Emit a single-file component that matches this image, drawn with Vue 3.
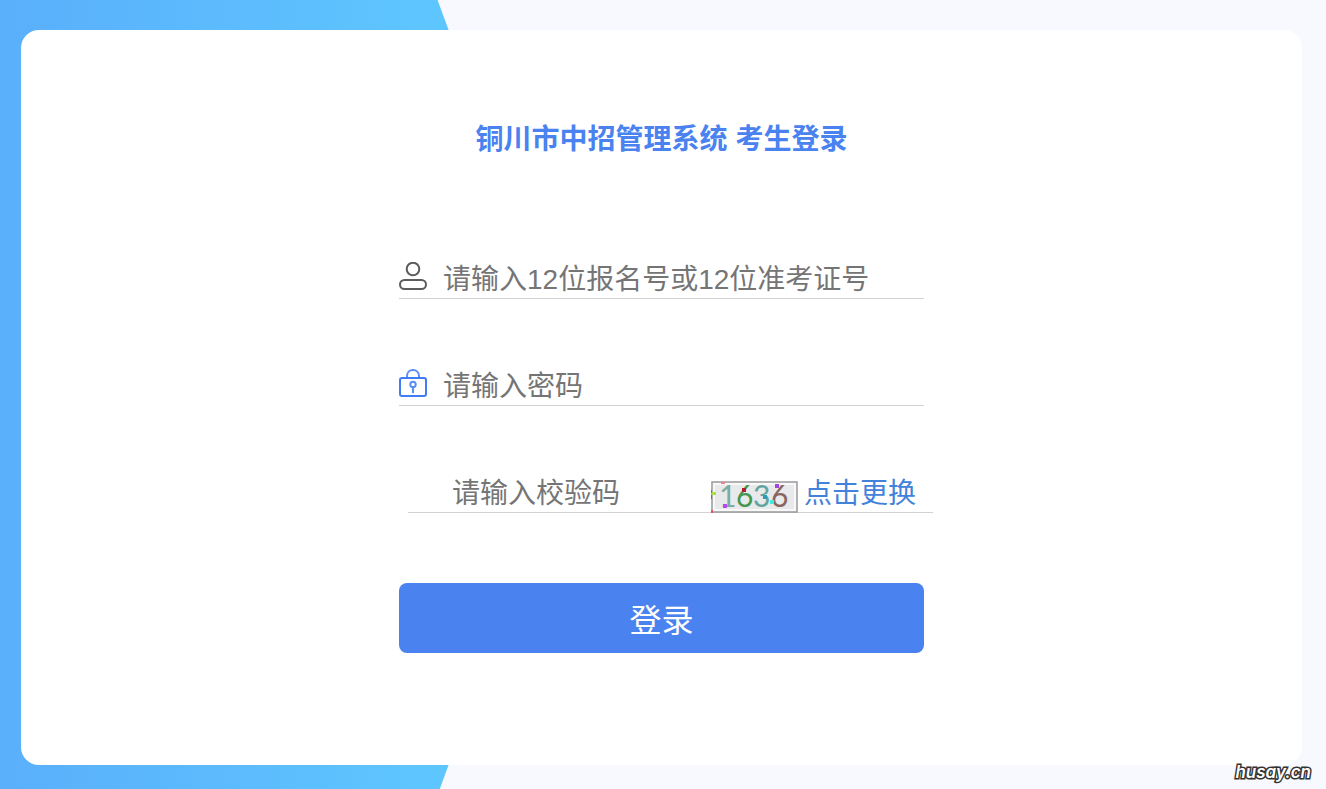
<script setup>
import { ref } from 'vue'

const account = ref('')
const password = ref('')
const code = ref('')
</script>

<template>
  <main class="page">
    <section class="card">
      <form class="form" @submit.prevent>
        <h1 class="title">铜川市中招管理系统 考生登录</h1>

        <div class="field">
          <label class="icon" for="account" aria-label="报名号或准考证号">
            <svg width="28" height="28" viewBox="0 0 28 28" fill="none" stroke="#5c5c5c" stroke-width="2">
              <circle cx="14" cy="7" r="6.3" />
              <rect x="1" y="18" width="26" height="9" rx="4.5" />
            </svg>
          </label>
          <input id="account" v-model="account" type="text" placeholder="请输入12位报名号或12位准考证号" />
        </div>

        <div class="field">
          <label class="icon" for="password" aria-label="密码">
            <svg width="28" height="28" viewBox="0 0 28 28" fill="none" stroke="#3f7cf5" stroke-width="2">
              <path d="M8 9V7C8 3.500 10.500 1 14 1S20 3.500 20 7V9" stroke="#5a8ef7" />
              <rect x="1" y="9" width="26" height="18" rx="2" />
              <circle cx="14" cy="15.500" r="2.700" stroke="#5a8ef7" />
              <path d="M14 17V24" stroke="#5a8ef7" />
            </svg>
          </label>
          <input id="password" v-model="password" type="password" placeholder="请输入密码" />
        </div>

        <div class="field field-code">
          <input id="code" v-model="code" type="text" aria-label="校验码" placeholder="请输入校验码" />
          <svg class="captcha" width="87" height="32" viewBox="0 0 87 32" role="img" aria-label="校验码图片">
            <rect x="1" y="1" width="85" height="30" fill="#f8f8f9" stroke="#999" stroke-width="1.500" />
            <rect x="4" y="4" width="79" height="24" fill="#e8e9eb" />
            <g class="digits">
              <text x="8" y="26" fill="#7cab9f">1</text>
              <text x="25" y="26" fill="#439751">6</text>
              <text x="42" y="26" fill="#62a49d">3</text>
              <text x="60" y="26" fill="#8a6460">6</text>
            </g>
            <rect x="10" y="1" width="4" height="2" fill="#ee7f91" />
            <rect x="1" y="11" width="4" height="3" fill="#a8e33c" />
            <rect x="0" y="9" width="1" height="3" fill="#e04090" />
            <rect x="0" y="14" width="1" height="4" fill="#8b4df5" />
            <rect x="0" y="29" width="2" height="3" fill="#e35264" />
            <rect x="12" y="23" width="4" height="4" fill="#b14cf0" />
            <rect x="31" y="7" width="4" height="4" fill="#b21c2e" />
            <rect x="52" y="14" width="4" height="4" fill="#2d9bb0" />
            <rect x="59" y="19" width="4" height="4" fill="#43ecdc" />
            <rect x="64" y="3" width="4" height="4" fill="#9d45e6" />
          </svg>
          <a class="refresh" href="#">点击更换</a>
        </div>

        <button class="submit" type="submit">登录</button>
      </form>
    </section>
    <span class="watermark">husay.cn</span>
  </main>
</template>

<style>
body {
  margin: 0;
}
</style>

<style scoped>
.page {
  position: relative;
  box-sizing: border-box;
  display: flex;
  min-height: 100vh;
  padding: 30px 24px 24px 21px;
  overflow: hidden;
  background: #f7f9fe;
  font-family: "Liberation Sans", "Noto Sans CJK SC", sans-serif;
}

.page::before {
  content: "";
  position: absolute;
  inset: 0 auto -6px 0;
  width: 44%;
  background: linear-gradient(90deg, #5aaffb, #5ec6ff 75%);
  clip-path: polygon(0 0, 75% 0, 100% 50%, 75% 100%, 0 100%);
}

.card {
  position: relative;
  flex: 1;
  display: flex;
  justify-content: center;
  padding: 88px 24px;
  border-radius: 18px;
  background: #fff;
}

.form {
  width: 100%;
  max-width: 525px;
}

.title {
  margin: 0 0 92px;
  color: #4a82f0;
  font-size: 28px;
  line-height: 44px;
  text-align: center;
}

.field {
  display: flex;
  align-items: center;
  height: 44px;
  margin-bottom: 62px;
  border-bottom: 1px solid #d2d2d2;
}

.icon {
  display: flex;
  margin-right: 16px;
}

.field input {
  box-sizing: border-box;
  flex: 1;
  min-width: 0;
  height: 44px;
  padding: 8px 0 0;
  border: 0;
  outline: 0;
  background: transparent;
  color: #333;
  font: 28px "Liberation Sans", "Noto Sans CJK SC", sans-serif;
}

.field input::placeholder {
  color: #757575;
}

.field-code {
  margin: 0 -9px 70px 9px;
  padding-left: 44px;
}

.captcha {
  align-self: flex-end;
  flex: none;
  margin: 0 6px -1px 0;
  overflow: visible;
}

.digits {
  font: 30px Lato, sans-serif;
}

.refresh {
  margin-right: 17px;
  padding-top: 8px;
  color: #4382da;
  font-size: 28px;
  line-height: 36px;
  text-decoration: none;
  white-space: nowrap;
}

.submit {
  display: block;
  width: 100%;
  height: 70px;
  padding: 0;
  border: 0;
  border-radius: 8px;
  background: #4a82f0;
  color: #fff;
  font: 32px "Liberation Sans", "Noto Sans CJK SC", sans-serif;
  cursor: pointer;
}

.watermark {
  position: absolute;
  right: 15px;
  bottom: 5px;
  color: #fff;
  font: italic 600 17px/24px Inter, sans-serif;
  -webkit-text-stroke: 3px #333;
  paint-order: stroke fill;
}
</style>
